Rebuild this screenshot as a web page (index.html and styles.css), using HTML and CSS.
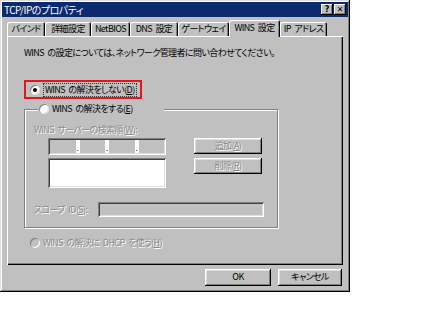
FILE: index.html
```html
<!DOCTYPE html>
<html lang="ja">
<head>
    <meta charset="UTF-8">
    <title>TCP/IPのプロパティ</title>
    <link rel="stylesheet" href="styles.css">
</head>
<body>
<div class="dialog">
    <div class="titlebar">
        <span class="title">TCP/IPのプロパティ</span>
        <div class="tb-btns">
            <span class="tb-btn">?</span>
            <span class="tb-btn">&#x2715;</span>
        </div>
    </div>

    <div class="tabs">
        <span class="tab t1">バインド</span>
        <span class="tab t2">詳細設定</span>
        <span class="tab t3">NetBIOS</span>
        <span class="tab t4">DNS 設定</span>
        <span class="tab t5">ゲートウェイ</span>
        <span class="tab t6 active">WINS 設定</span>
        <span class="tab t7">IP アドレス</span>
    </div>

    <div class="panel">
        <p class="info">WINS の設定については、ネットワーク管理者に問い合わせてください。</p>

        <div class="mark">
            <label class="opt"><span class="radio checked"></span><span class="focus">WINS の解決をしない(<u>D</u>)</span></label>
        </div>

        <fieldset class="group">
            <legend><label class="opt"><span class="radio"></span>WINS の解決をする(<u>E</u>)</label></legend>
            <div class="servers">
                <div class="srv-left">
                    <div class="dis">WINS サーバーの検索順(<u>W</u>):</div>
                    <div class="ipfield">
                        <span class="seg"></span><span class="dot">.</span>
                        <span class="seg"></span><span class="dot">.</span>
                        <span class="seg"></span><span class="dot">.</span>
                        <span class="seg"></span>
                    </div>
                    <div class="listbox"></div>
                </div>
                <div class="srv-btns">
                    <span class="btn dis">追加(<u>A</u>)</span>
                    <span class="btn dis">削除(<u>R</u>)</span>
                </div>
            </div>
            <div class="scope">
                <span class="dis">スコープ ID(<u>S</u>):</span>
                <span class="scopefield"></span>
            </div>
        </fieldset>

        <label class="opt dhcp dis"><span class="radio off"></span>WINS の解決に DHCP を使う(<u>H</u>)</label>
    </div>

    <div class="footer">
        <span class="btn ok">OK</span>
        <span class="btn cancel">キャンセル</span>
    </div>
</div>
</body>
</html>
```

FILE: styles.css
```css
*{margin:0;padding:0;box-sizing:border-box;}

body{background:#fff;font-family:"Noto Sans CJK JP","Liberation Sans",sans-serif;font-size:9px;line-height:12px;letter-spacing:-0.6px;word-spacing:2px;color:#000;font-feature-settings:"palt";}

u{text-decoration:underline;}

/* window frame */
.dialog{
    width:350px;
    height:292px;
    padding:2px;
    background:#c0c0c0;
    box-shadow:inset -1px -1px #000,inset 1px 1px #dfdfdf,inset -2px -2px #808080,inset 2px 2px #fff;
}
.titlebar{
    height:15px;
    background:#0c2a6e;
    display:flex;
    align-items:center;
    justify-content:space-between;
    padding:0 2px 0 2px;
}
.title{color:#fff;font-size:10px;letter-spacing:-0.5px;}
.tb-btns{display:flex;gap:1px;}
.tb-btn{
    width:12px;
    height:11px;
    background:#c0c0c0;
    font-size:8px;
    line-height:11px;
    font-weight:bold;
    letter-spacing:0;
    text-align:center;
    font-family:"DejaVu Sans",sans-serif;
    box-shadow:inset -1px -1px #000,inset 1px 1px #fff,inset -2px -2px #808080;
}

/* tabs */
.tabs{display:flex;align-items:flex-end;height:19px;padding:3px 0 0 5px;}
.tab{
    height:14px;
    text-align:center;
    line-height:13px;
    border-radius:2px 2px 0 0;
    box-shadow:inset 1px 1px #fff,inset -1px 0 #000,inset -2px 0 #808080;
    white-space:nowrap;
}
.t1{width:38px;}
.t2{width:46px;}
.t3{width:39px;}
.t4{width:48px;}
.t5{width:51px;}
.t6{width:51px;}
.t7{width:47px;}
.tab.active{height:17px;margin-bottom:-1px;line-height:15px;background:#c0c0c0;position:relative;z-index:1;}

.panel{
    margin:0 5px;
    height:229px;
    padding:1px;
    box-shadow:inset 1px 1px #fff,inset -1px -1px #000,inset -2px -2px #808080;
}
.info{margin:10px 0 0 16px;}

.mark{
    margin:21px 0 0 16px;
    width:118px;
    height:19px;
    border:2px solid #e5151b;
    display:flex;
    align-items:center;
    padding-left:4px;
}
.opt{display:flex;align-items:center;white-space:nowrap;}
.radio{
    width:10px;
    height:10px;
    border-radius:50%;
    background:#fff;
    margin-right:3px;
    position:relative;
    box-shadow:inset 1px 1px #808080,inset -1px -1px #dfdfdf;
    flex:none;
}
.radio.checked::after{
    content:"";
    position:absolute;
    left:3px;
    top:3px;
    width:4px;
    height:4px;
    border-radius:50%;
    background:#000;
}
.radio.off{background:#c0c0c0;}
.focus{border:1px dotted #333;padding:0 1px;line-height:12px;}

/* group box */
.group{
    margin:3px 0 0 16px;
    width:254px;
    padding:8px 0 10px 9px;
    border:1px solid #808080;
    box-shadow:1px 1px 0 #fff,inset 1px 1px 0 #fff;
}
.group legend{
    margin-left:4px;
    padding-left:1px;
    width:126px;
    height:14px;
    background:#c0c0c0;
    display:flex;
    align-items:center;
}

.dis{color:#8a8a8a;text-shadow:1px 1px 0 #fff;}

.servers{display:flex;gap:28px;}
.srv-left{display:flex;flex-direction:column;}
.srv-left .dis{margin-bottom:2px;}
.ipfield{
    margin-left:14px;
    width:118px;
    height:17px;
    display:flex;
    padding:2px;
    background:#c0c0c0;
    box-shadow:inset 1px 1px #808080,inset -1px -1px #fff,inset 2px 2px #404040,inset -2px -2px #dfdfdf;
}
.seg{flex:1;}
.dot{width:4px;background:#fff;line-height:15px;text-align:center;font-size:8px;letter-spacing:0;}
.listbox{
    margin:3px 0 0 14px;
    width:118px;
    height:30px;
    background:#fff;
    box-shadow:inset 1px 1px #808080,inset -1px -1px #fff,inset 2px 2px #404040,inset -2px -2px #dfdfdf;
}
.srv-btns{display:flex;flex-direction:column;gap:4px;padding-top:14px;}

.btn{
    display:block;
    height:16px;
    text-align:center;
    line-height:16px;
    background:#c0c0c0;
    box-shadow:inset -1px -1px #000,inset 1px 1px #fff,inset -2px -2px #808080,inset 2px 2px #dfdfdf;
}
.srv-btns .btn{width:68px;}

.scope{display:flex;align-items:center;margin-top:14px;}
.scope .dis{width:64px;white-space:nowrap;}
.scopefield{
    width:166px;
    height:15px;
    box-shadow:inset 1px 1px #808080,inset -1px -1px #fff,inset 2px 2px #404040,inset -2px -2px #dfdfdf;
}

.dhcp{margin:9px 0 0 22px;}
.dhcp .radio{box-shadow:inset 1px 1px #808080,inset -1px -1px #fff;}

/* bottom buttons */
.footer{display:flex;justify-content:flex-end;gap:7px;margin:4px 6px 0 0;}
.ok{width:66px;height:17px;}
.cancel{width:64px;height:17px;}
```
